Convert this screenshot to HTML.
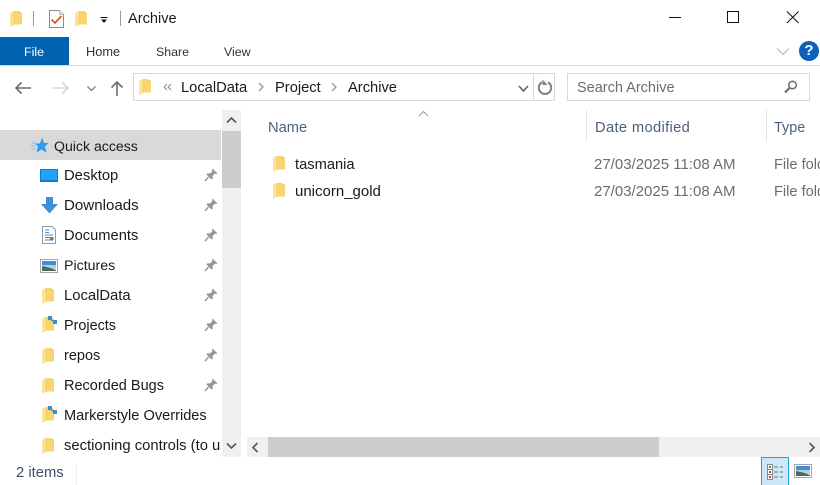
<!DOCTYPE html>
<html><head><meta charset="utf-8"><style>
html,body{margin:0;padding:0;background:#fff}
#r{position:relative;width:820px;height:485px;overflow:hidden;background:#fff;font-family:"Liberation Sans",sans-serif;font-size:14px;color:#1a1a1a}
.t{position:absolute;white-space:nowrap;line-height:20px}
.b{position:absolute}
svg.i{position:absolute;overflow:visible}
.g{color:#6d6d6d}
</style></head><body><div id="r">
<svg width="0" height="0" style="position:absolute"><defs>
<symbol id="f" viewBox="0 0 12 17"><path d="M3 1H8.500V3H12V14.500H3z" fill="#f9d56f"/><path d="M8.500 1V3H12" fill="#efc04e"/><path d="M0 3 4 1V15L0 17z" fill="#fce29a"/><path d="M4 1V15" stroke="#f2c95f" stroke-width=".8"/></symbol>
<symbol id="p" viewBox="0 0 14 14"><path d="M8.500 .5 13.500 5.500 12 6 11 5.500 8.500 8 8.800 10.500 7.500 11.500 2.500 6.500 3.500 5.200 6 5.500 8.500 3 8 2z" fill="#8b97a1"/><path d="M4.500 9 1 13" stroke="#8b97a1" stroke-width="1.400"/></symbol>
<symbol id="s" viewBox="0 0 16 17"><use href="#f" width="12" height="17"/><path d="M7 2 12 6" stroke="#3a8ad6" stroke-width="1.200"/><rect x="6" y="0" width="4" height="4" fill="#3a8ad6"/><rect x="11" y="4" width="4" height="4" fill="#3a8ad6"/></symbol>
</defs></svg>

<!-- title bar -->
<svg class="i" style="left:10px;top:10px" width="12" height="17"><use href="#f" width="12" height="17"/></svg>
<div class="b" style="left:33px;top:11px;width:1px;height:15px;background:#9a9a9a"></div>
<svg class="i" style="left:49px;top:10px" width="15" height="18"><path d="M.5.500H10.500L14.500 4.500V17.500H.5z" fill="#fff" stroke="#8c8c8c"/><path d="M10.500.5V4.500H14.500" fill="#eee" stroke="#bbb"/><path d="M2.500 9.500 6 13 12.500 6" fill="none" stroke="#e0591c" stroke-width="1.800"/></svg>
<svg class="i" style="left:75px;top:10px" width="12" height="17"><use href="#f" width="12" height="17"/></svg>
<svg class="i" style="left:100px;top:16px" width="8" height="8"><path d="M.5 1.500H7.500" stroke="#111"/><path d="M1 3.500H7L4 7z" fill="#111"/></svg>
<div class="b" style="left:120px;top:11px;width:1px;height:15px;background:#9a9a9a"></div>
<div class="t" style="left:128px;top:9px;font-size:14.600px">Archive</div>
<svg class="i" style="left:668px;top:11px" width="140" height="14"><path d="M1 6.500H13" stroke="#111"/><rect x="59.500" y=".5" width="11" height="11" fill="none" stroke="#111"/><path d="M119 .5 130.500 12M130.500 .5 119 12" stroke="#111" fill="none"/></svg>

<!-- ribbon -->
<div class="b" style="left:0;top:37px;width:69px;height:28px;background:#0063b1"></div>
<div class="t" style="left:24px;top:42px;color:#fff;font-size:12.400px">File</div>
<div class="t" style="left:86px;top:42px;font-size:12.800px;color:#333">Home</div>
<div class="t" style="left:156px;top:42px;font-size:12.400px;color:#333">Share</div>
<div class="t" style="left:224px;top:42px;font-size:12.400px;color:#333">View</div>
<div class="b" style="left:0;top:65px;width:820px;height:1px;background:#dadada"></div>
<svg class="i" style="left:776px;top:47px" width="14" height="9"><path d="M1 1.500 7 7.500 13 1.500" fill="none" stroke="#b4b4b4" stroke-width="1.100"/></svg>
<div class="b" style="left:799px;top:41px;width:20px;height:20px;border-radius:50%;background:#0a62bb;color:#fff;font:bold 15px/20px 'Liberation Sans',sans-serif;text-align:center">?</div>

<!-- nav -->
<svg class="i" style="left:14px;top:80px" width="120" height="17"><path d="M2 8H17M7.500 2.500 2 8 7.500 13.500" fill="none" stroke="#6d6d6d" stroke-width="1.600"/><path d="M39 8H54M48.500 2.500 54 8 48.500 13.500" fill="none" stroke="#d8d8d8" stroke-width="1.600"/><path d="M73.500 6.500 77.500 10.500 81.500 6.500" fill="none" stroke="#888" stroke-width="1.500"/><path d="M103 16V2M97.500 7.500 103 2 108.500 7.500" fill="none" stroke="#6d6d6d" stroke-width="1.600"/></svg>
<div class="b" style="left:133px;top:73px;width:420px;height:26px;border:1px solid #d9d9d9"></div>
<div class="b" style="left:533px;top:73px;width:1px;height:28px;background:#d9d9d9"></div>
<svg class="i" style="left:139px;top:78px" width="12" height="17"><use href="#f" width="12" height="17"/></svg>
<svg class="i" style="left:163px;top:83px" width="9" height="8"><path d="M4 1 1 4 4 7M8 1 5 4 8 7" fill="none" stroke="#888"/></svg>
<div class="t" style="left:181px;top:78px;font-size:14.700px">LocalData</div>
<svg class="i" style="left:258px;top:82px" width="7" height="10"><path d="M1 1 5 5 1 9" fill="none" stroke="#999" stroke-width="1.300"/></svg>
<div class="t" style="left:275px;top:78px;font-size:14.700px">Project</div>
<svg class="i" style="left:331px;top:82px" width="7" height="10"><path d="M1 1 5 5 1 9" fill="none" stroke="#999" stroke-width="1.300"/></svg>
<div class="t" style="left:348px;top:78px;font-size:14.700px">Archive</div>
<svg class="i" style="left:518px;top:85px" width="12" height="8"><path d="M1 1 5.500 6 10 1" fill="none" stroke="#666" stroke-width="1.600"/></svg>
<svg class="i" style="left:537px;top:79px" width="16" height="17"><path d="M5 3.300A6.200 6.200 0 1 0 11 3.300" fill="none" stroke="#808080" stroke-width="2"/><path d="M5.500 .5V6H10.500z" fill="#808080"/></svg>
<div class="b" style="left:567px;top:73px;width:241px;height:26px;border:1px solid #d9d9d9"></div>
<div class="t g" style="left:577px;top:78px;font-size:14.500px">Search Archive</div>
<svg class="i" style="left:784px;top:80px" width="14" height="14"><circle cx="8.500" cy="5" r="3.800" fill="none" stroke="#6d6d6d" stroke-width="1.500"/><path d="M5.500 8 1 12.500" stroke="#6d6d6d" stroke-width="2.200"/></svg>

<!-- sidebar -->
<div class="b" style="left:0;top:130px;width:221px;height:30px;background:#d9d9d9"></div>
<div class="b" style="left:222px;top:110px;width:19px;height:347px;background:#f0f0f0"></div>
<div class="b" style="left:222px;top:131px;width:19px;height:57px;background:#cdcdcd"></div>
<svg class="i" style="left:226px;top:116px" width="11" height="8"><path d="M1 6.500 5.500 2 10 6.500" fill="none" stroke="#555" stroke-width="1.600"/></svg>
<svg class="i" style="left:226px;top:442px" width="11" height="8"><path d="M1 1.500 5.500 6 10 1.500" fill="none" stroke="#555" stroke-width="1.600"/></svg>

<svg class="i" style="left:31px;top:137px" width="18" height="17"><path d="M11 .5 13 6H17.500L14 9.500 15.500 15.500 10.500 12.500 5.500 15.500 7 9.500 4 6.500H9z" fill="#2d9cf0"/><path d="M1 6H4M0 9H4M1 12H5" stroke="#7fbdec"/></svg>
<div class="t" style="left:54px;top:136px;font-size:14.100px">Quick access</div>

<svg class="i" style="left:40px;top:169px" width="18" height="14"><rect width="18" height="13" fill="#0f7fc4"/><rect x="1" y="1" width="16" height="10" fill="#1fa3ff"/></svg>
<div class="t" style="left:64px;top:166px;font-size:14.800px">Desktop</div>
<svg class="i" style="left:41px;top:197px" width="17" height="17"><path d="M5 0H12V7H17L8.500 16.500 0 7H5z" fill="#3e8fe0"/></svg>
<div class="t" style="left:64px;top:196px;font-size:15.100px">Downloads</div>
<svg class="i" style="left:42px;top:226px" width="14" height="18"><path d="M.5.500H10L13.500 4V17.500H.5z" fill="#fff" stroke="#9a9a9a"/><path d="M3 4H7M3 6.500H7M3 9H11M3 11.500H8M3 14H11" stroke="#4a90d0"/><rect x="8" y="11" width="3.500" height="3" fill="#777"/></svg>
<div class="t" style="left:64px;top:226px;font-size:14.700px">Documents</div>
<svg class="i" style="left:40px;top:259px" width="18" height="14"><rect x=".5" y=".5" width="17" height="13" fill="#fff" stroke="#a5a5a5"/><rect x="2" y="2" width="14" height="4" fill="#3f8fd9"/><rect x="2" y="6" width="14" height="4" fill="#b6cfd8"/><path d="M2 7 9 8.500 16 11V12H2z" fill="#4f6a5c"/></svg>
<div class="t" style="left:64px;top:256px;font-size:14.200px">Pictures</div>
<svg class="i" style="left:42px;top:287px" width="12" height="17"><use href="#f" width="12" height="17"/></svg>
<div class="t" style="left:64px;top:286px;font-size:14.800px">LocalData</div>
<svg class="i" style="left:42px;top:316px" width="16" height="17"><use href="#s" width="16" height="17"/></svg>
<div class="t" style="left:64px;top:316px;font-size:14.400px">Projects</div>
<svg class="i" style="left:42px;top:347px" width="12" height="17"><use href="#f" width="12" height="17"/></svg>
<div class="t" style="left:64px;top:346px;font-size:14.500px">repos</div>
<svg class="i" style="left:42px;top:377px" width="12" height="17"><use href="#f" width="12" height="17"/></svg>
<div class="t" style="left:64px;top:376px;font-size:14.500px">Recorded Bugs</div>
<svg class="i" style="left:42px;top:406px" width="16" height="17"><use href="#s" width="16" height="17"/></svg>
<div class="t" style="left:64px;top:406px;font-size:14.600px">Markerstyle Overrides</div>
<svg class="i" style="left:42px;top:437px" width="12" height="17"><use href="#f" width="12" height="17"/></svg>
<div class="b" style="left:64px;top:436px;width:157px;height:21px;overflow:hidden"><div class="t" style="left:0;top:0;font-size:14.800px">sectioning controls (to use)</div></div>

<svg class="i" style="left:204px;top:168px" width="14" height="14"><use href="#p" width="14" height="14"/></svg>
<svg class="i" style="left:204px;top:198px" width="14" height="14"><use href="#p" width="14" height="14"/></svg>
<svg class="i" style="left:204px;top:228px" width="14" height="14"><use href="#p" width="14" height="14"/></svg>
<svg class="i" style="left:204px;top:258px" width="14" height="14"><use href="#p" width="14" height="14"/></svg>
<svg class="i" style="left:204px;top:288px" width="14" height="14"><use href="#p" width="14" height="14"/></svg>
<svg class="i" style="left:204px;top:318px" width="14" height="14"><use href="#p" width="14" height="14"/></svg>
<svg class="i" style="left:204px;top:348px" width="14" height="14"><use href="#p" width="14" height="14"/></svg>
<svg class="i" style="left:204px;top:378px" width="14" height="14"><use href="#p" width="14" height="14"/></svg>

<!-- file list -->
<svg class="i" style="left:418px;top:110px" width="11" height="7"><path d="M1 6 5.500 1.500 10 6" fill="none" stroke="#9a9a9a"/></svg>
<div class="t" style="left:268px;top:118px;font-size:14.700px;color:#4c607a">Name</div>
<div class="b" style="left:586px;top:110px;width:1px;height:32px;background:#e5e5e5"></div>
<div class="t" style="left:595px;top:118px;font-size:14.700px;letter-spacing:.35px;color:#4c607a">Date modified</div>
<div class="b" style="left:766px;top:110px;width:1px;height:32px;background:#e5e5e5"></div>
<div class="t" style="left:774px;top:118px;font-size:14.400px;color:#4c607a">Type</div>

<svg class="i" style="left:273px;top:155px" width="12" height="17"><use href="#f" width="12" height="17"/></svg>
<div class="t" style="left:295px;top:155px;font-size:14.700px">tasmania</div>
<div class="t g" style="left:594px;top:155px;font-size:15px">27/03/2025 11:08 AM</div>
<div class="t g" style="left:774px;top:155px;font-size:14.600px">File folder</div>
<svg class="i" style="left:273px;top:182px" width="12" height="17"><use href="#f" width="12" height="17"/></svg>
<div class="t" style="left:295px;top:182px;font-size:15px">unicorn_gold</div>
<div class="t g" style="left:594px;top:182px;font-size:15px">27/03/2025 11:08 AM</div>
<div class="t g" style="left:774px;top:182px;font-size:14.600px">File folder</div>

<!-- h scrollbar -->
<div class="b" style="left:247px;top:437px;width:573px;height:20px;background:#f0f0f0"></div>
<div class="b" style="left:268px;top:437px;width:391px;height:20px;background:#cdcdcd"></div>
<svg class="i" style="left:251px;top:442px" width="8" height="11"><path d="M6.500 1 2 5.500 6.500 10" fill="none" stroke="#555" stroke-width="1.600"/></svg>
<svg class="i" style="left:808px;top:442px" width="8" height="11"><path d="M1.500 1 6 5.500 1.500 10" fill="none" stroke="#555" stroke-width="1.600"/></svg>

<!-- status -->
<div class="t" style="left:16px;top:463px;font-size:14.800px;color:#3c4f68">2 items</div>
<div class="b" style="left:76px;top:465px;width:1px;height:20px;background:#eee"></div>
<div class="b" style="left:761px;top:457px;width:26px;height:28px;background:#cce8f6;border:1px solid #26a0da;border-bottom:0"></div>
<svg class="i" style="left:767px;top:464px" width="18" height="18"><g fill="#fff" stroke="#8a8a8a"><rect x=".5" y=".5" width="5" height="5"/><rect x=".5" y="5.500" width="5" height="5"/><rect x=".5" y="10.500" width="5" height="5"/></g><rect x="2" y="2" width="2" height="2" fill="#577"/><rect x="2" y="7" width="2" height="2" fill="#953"/><rect x="2" y="12" width="2" height="2" fill="#a42"/><path d="M7 3H11M13 3H16M7 8H11M13 8H16M7 13H11M13 13H16" stroke="#777"/></svg>
<svg class="i" style="left:794px;top:464px" width="18" height="14"><rect x=".5" y=".5" width="17" height="13" fill="#fff" stroke="#a5a5a5"/><rect x="2" y="2" width="14" height="4" fill="#3f8fd9"/><rect x="2" y="6" width="14" height="4" fill="#b6cfd8"/><path d="M2 7 9 8.500 16 11V12H2z" fill="#4f6a5c"/></svg>
</div></body></html>
